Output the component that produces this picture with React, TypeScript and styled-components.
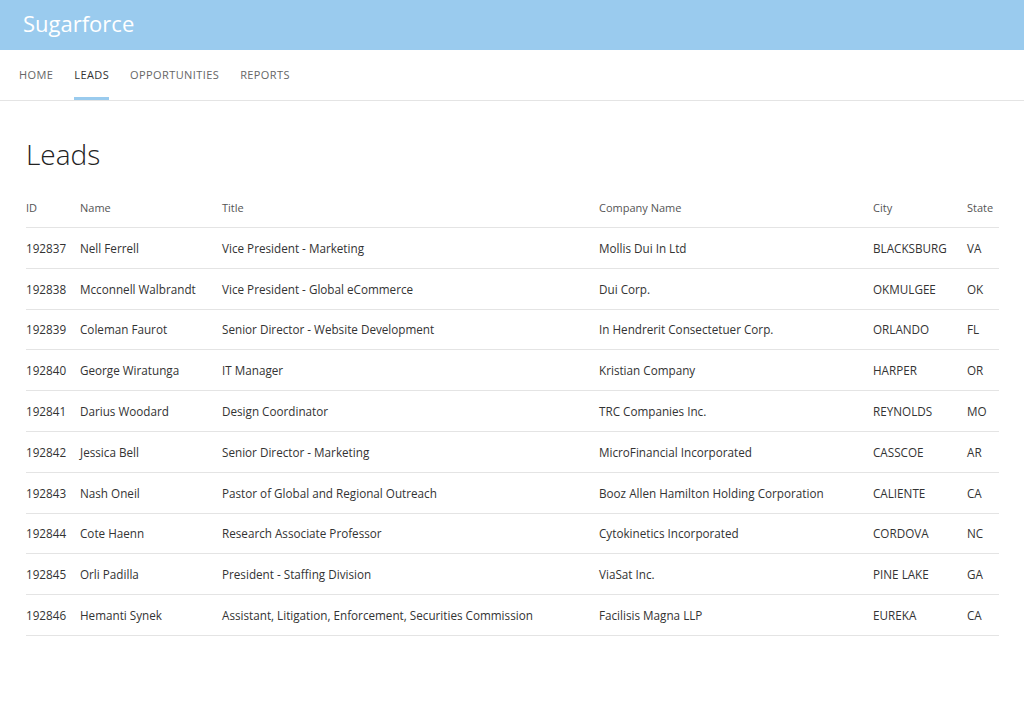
import React from 'react';
import styled, {createGlobalStyle} from 'styled-components';

const COLORS = {
    blue: '#9acbee',
    text: '#333333',
    muted: '#555555',
    nav: '#666666',
    line: '#e4e4e4',
};

const leads = [
    {id: 192837, name: 'Nell Ferrell', title: 'Vice President - Marketing', company: 'Mollis Dui In Ltd', city: 'BLACKSBURG', state: 'VA'},
    {id: 192838, name: 'Mcconnell Walbrandt', title: 'Vice President - Global eCommerce', company: 'Dui Corp.', city: 'OKMULGEE', state: 'OK'},
    {id: 192839, name: 'Coleman Faurot', title: 'Senior Director - Website Development', company: 'In Hendrerit Consectetuer Corp.', city: 'ORLANDO', state: 'FL'},
    {id: 192840, name: 'George Wiratunga', title: 'IT Manager', company: 'Kristian Company', city: 'HARPER', state: 'OR'},
    {id: 192841, name: 'Darius Woodard', title: 'Design Coordinator', company: 'TRC Companies Inc.', city: 'REYNOLDS', state: 'MO'},
    {id: 192842, name: 'Jessica Bell', title: 'Senior Director - Marketing', company: 'MicroFinancial Incorporated', city: 'CASSCOE', state: 'AR'},
    {id: 192843, name: 'Nash Oneil', title: 'Pastor of Global and Regional Outreach', company: 'Booz Allen Hamilton Holding Corporation', city: 'CALIENTE', state: 'CA'},
    {id: 192844, name: 'Cote Haenn', title: 'Research Associate Professor', company: 'Cytokinetics Incorporated', city: 'CORDOVA', state: 'NC'},
    {id: 192845, name: 'Orli Padilla', title: 'President - Staffing Division', company: 'ViaSat Inc.', city: 'PINE LAKE', state: 'GA'},
    {id: 192846, name: 'Hemanti Synek', title: 'Assistant, Litigation, Enforcement, Securities Commission', company: 'Facilisis Magna LLP', city: 'EUREKA', state: 'CA'},
];

const columns = [
    {key: 'id', label: 'ID', width: 54},
    {key: 'name', label: 'Name', width: 142},
    {key: 'title', label: 'Title', width: 377},
    {key: 'company', label: 'Company Name', width: 274},
    {key: 'city', label: 'City', width: 94},
    {key: 'state', label: 'State', width: 32},
];

const navItems = ['Home', 'Leads', 'Opportunities', 'Reports'];


export default function App() {
    return (
        <Page>
            <GlobalStyle/>
            <TopBar>
                <Brand>Sugarforce</Brand>
            </TopBar>

            <Nav>
                {navItems.map(item => (
                    <NavItem key={item} active={item === 'Leads'}>{item}</NavItem>
                ))}
            </Nav>

            <Content>
                <Heading>Leads</Heading>

                <Table>
                    <colgroup>
                        {columns.map(col => <col key={col.key} width={col.width}/>)}
                    </colgroup>
                    <thead>
                        <tr>
                            {columns.map(col => <HeadCell key={col.key}>{col.label}</HeadCell>)}
                        </tr>
                    </thead>
                    <tbody>
                        {leads.map(lead => (
                            <tr key={lead.id}>
                                {columns.map(col => (
                                    <Cell key={col.key}>{lead[col.key as keyof typeof lead]}</Cell>
                                ))}
                            </tr>
                        ))}
                    </tbody>
                </Table>
            </Content>
        </Page>
    );
}


const GlobalStyle = createGlobalStyle`
  html, body {
    margin: 0;
    padding: 0;
    background: #ffffff;
  }
  body {
    font-family: "Open Sans", "Liberation Sans", sans-serif;
    color: ${COLORS.text};
  }
`;

const Page = styled.div`
    min-height: 721px;
    background: #ffffff;
`;

const TopBar = styled.header`
    height: 50px;
    background: ${COLORS.blue};
    display: flex;
    align-items: center;
    padding: 0 23px;
    box-sizing: border-box;
`;

const Brand = styled.div`
    color: #ffffff;
    font-size: 22px;
    line-height: 28px;
    margin-top: -4px;
`;

const Nav = styled.nav`
    height: 50px;
    display: flex;
    gap: 21px;
    padding: 0 19px;
    border-bottom: 1px solid ${COLORS.line};
`;

const NavItem = styled.div<{active?: boolean}>`
    display: flex;
    align-items: center;
    height: 50px;
    box-sizing: border-box;
    font-size: 11px;
    letter-spacing: 0.4px;
    text-transform: uppercase;
    color: ${p => p.active ? COLORS.text : COLORS.nav};
    border-bottom: 3px solid ${p => p.active ? COLORS.blue : 'transparent'};
    border-top: 3px solid transparent;
    padding-bottom: 2px;
`;

const Content = styled.main`
    padding: 33px 25px 0 26px;
`;

const Heading = styled.h1`
    margin: 0 0 14px;
    font-size: 28px;
    font-weight: 300;
    line-height: 40px;
    color: #222222;
`;

const Table = styled.table`
    width: 973px;
    border-collapse: collapse;
    table-layout: fixed;
`;

const HeadCell = styled.th`
    text-align: left;
    font-weight: 400;
    font-size: 11px;
    color: ${COLORS.muted};
    padding: 0 0 12px;
    height: 27px;
    vertical-align: bottom;
    border-bottom: 1px solid ${COLORS.line};
    white-space: nowrap;
`;

const Cell = styled.td`
    font-size: 11.7px;
    color: ${COLORS.text};
    height: 39.8px;
    padding: 0;
    vertical-align: middle;
    border-bottom: 1px solid ${COLORS.line};
    white-space: nowrap;
`;
